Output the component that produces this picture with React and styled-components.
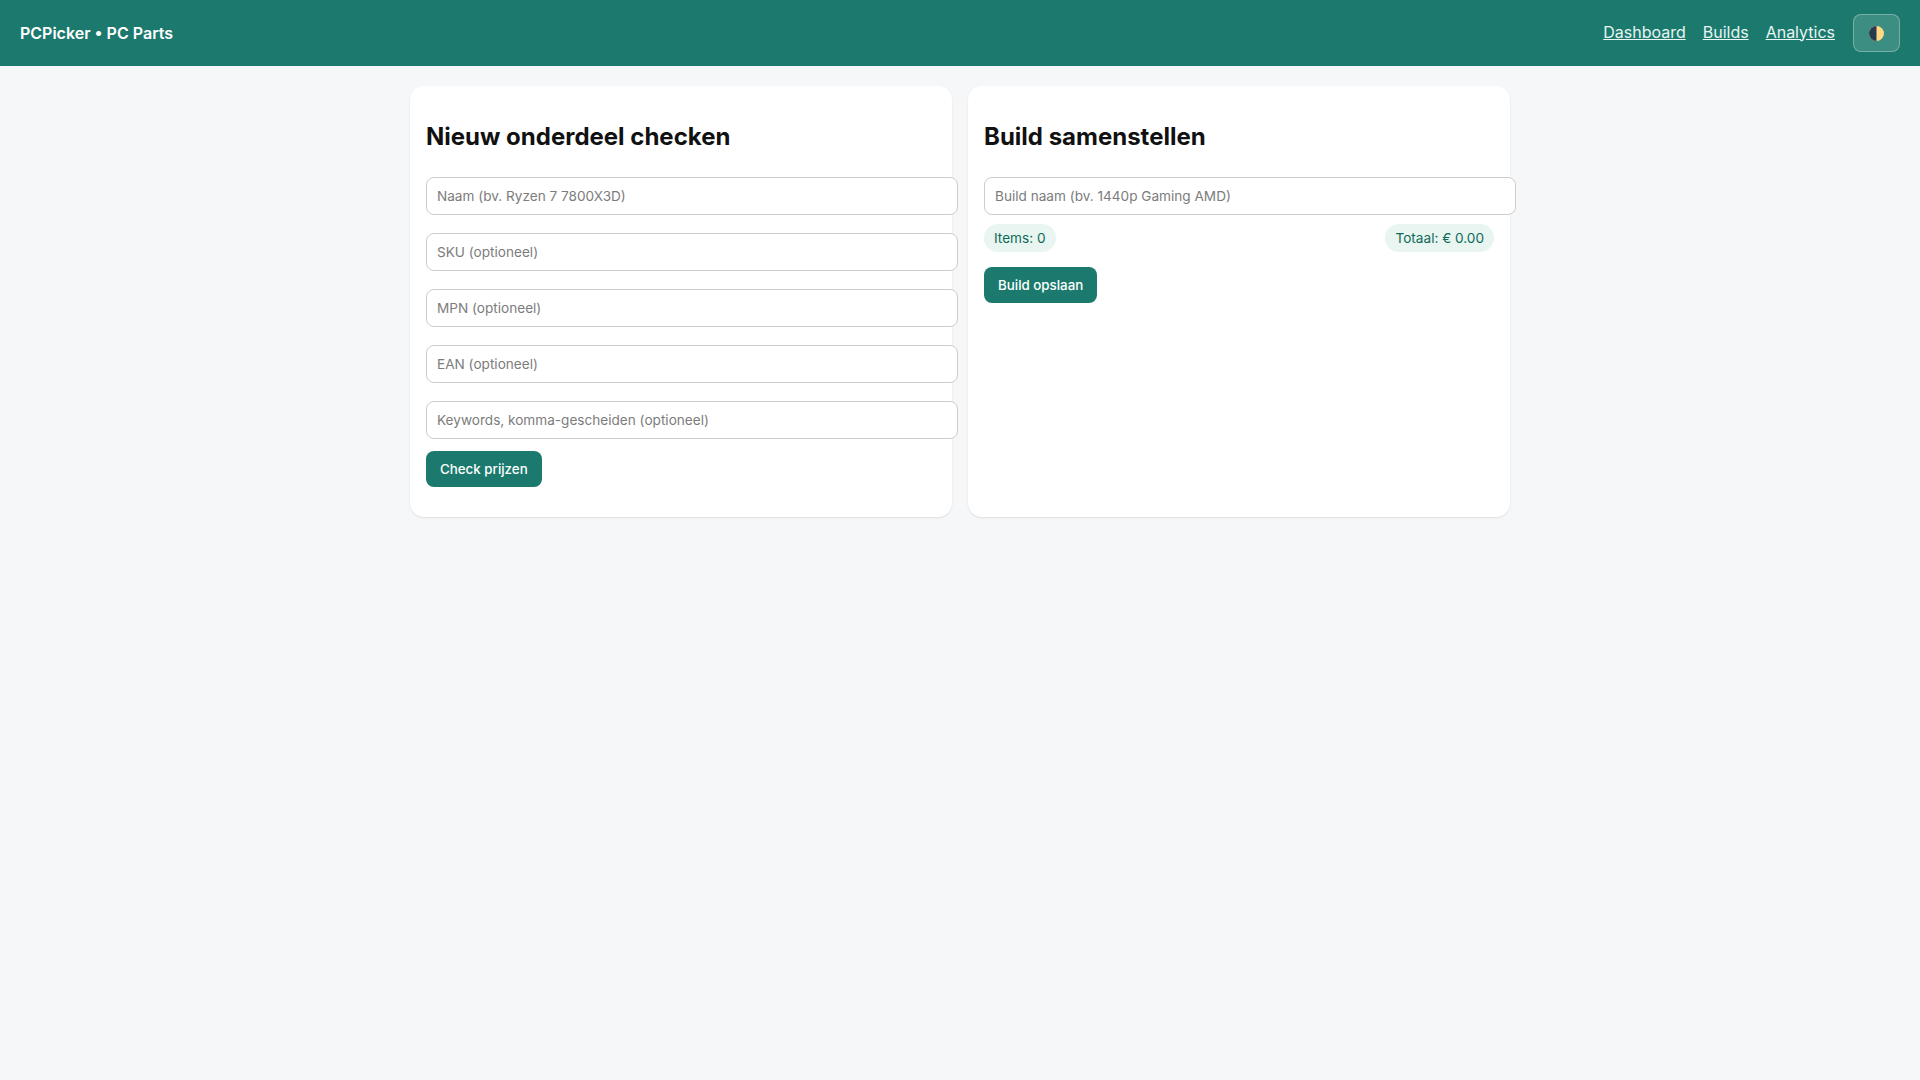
import React from "react";
import styled, { createGlobalStyle } from "styled-components";

const Global = createGlobalStyle`
  html, body { margin: 0; padding: 0; }
  body {
    background: #f5f7f9;
    color: #111111;
    font-family: Inter, "Liberation Sans", sans-serif;
    min-height: 100vh;
  }
`;

const Header = styled.header`
  height: 66px;
  box-sizing: border-box;
  padding: 0 20px;
  background: #1b7a6d;
  display: flex;
  align-items: center;
  justify-content: space-between;
`;
const Brand = styled.div`
  color: #ffffff;
  font-size: 16px;
  font-weight: 600;
`;
const Nav = styled.nav`
  display: flex;
  align-items: center;
  gap: 17px;
`;
const NavLink = styled.a`
  color: #e8f5f2;
  font-size: 16px;
  line-height: 19px;
  padding-bottom: 2px;
  text-decoration: underline;
  cursor: pointer;
  &:nth-child(3) { margin-right: 1px; }
`;
const ThemeButton = styled.button`
  width: 47px;
  height: 38px;
  box-sizing: border-box;
  padding: 0;
  border: 1px solid rgba(255, 255, 255, 0.3);
  border-radius: 8px;
  background: rgba(255, 255, 255, 0.15);
  display: flex;
  align-items: center;
  justify-content: center;
`;
const Main = styled.main`
  width: 1100px;
  margin: 20px auto 0;
  display: grid;
  grid-template-columns: 1fr 1fr;
  gap: 16px;
`;
const Card = styled.section`
  background: #ffffff;
  border-radius: 14px;
  box-shadow: 0 1px 2px rgba(0, 0, 0, 0.1);
  padding: 16px;
  min-width: 0;
`;
const Title = styled.h2`
  margin: 20px 0 26px;
  font-size: 24px;
  line-height: 29px;
  font-weight: 700;
  color: #111111;
`;
const Field = styled.input`
  display: block;
  width: 510px;
  height: 36px;
  box-sizing: content-box;
  padding: 0 10px;
  margin: 0 0 ${(p) => p.$after}px;
  border: 1px solid #cccccc;
  border-radius: 8px;
  background: #ffffff;
  font-family: inherit;
  font-size: 13.6px;
  outline: none;
  &::placeholder { color: #7c7c7c; }
`;
const Summary = styled.div`
  display: flex;
  justify-content: space-between;
  margin-bottom: 15px;
`;
const Pill = styled.span`
  height: 28px;
  padding: 0 10px;
  display: inline-flex;
  align-items: center;
  border-radius: 999px;
  background: #e8f5f1;
  color: #0f6b57;
  font-size: 13.6px;
`;
const Action = styled.button`
  display: block;
  height: 36px;
  padding: 0 14px;
  margin-bottom: 14px;
  border: 0;
  border-radius: 8px;
  background: #1b7a6d;
  color: #ffffff;
  font-family: inherit;
  font-size: 13.33px;
  font-weight: 500;
`;

const fields = [
  "Naam (bv. Ryzen 7 7800X3D)",
  "SKU (optioneel)",
  "MPN (optioneel)",
  "EAN (optioneel)",
  "Keywords, komma-gescheiden (optioneel)",
];

const HalfMoon = () => (
  <svg width="15" height="15" viewBox="0 0 15 15" aria-hidden="true">
    <circle cx="7.5" cy="7.5" r="7.5" fill="#ffd983" />
    <path d="M7.5 0a7.5 7.5 0 0 0 0 15z" fill="#283a4d" />
  </svg>
);

export default function App() {
  return (
    <>
      <Global />
      <Header>
        <Brand>PCPicker • PC Parts</Brand>
        <Nav>
          <NavLink>Dashboard</NavLink>
          <NavLink>Builds</NavLink>
          <NavLink>Analytics</NavLink>
          <ThemeButton aria-label="Thema wisselen">
            <HalfMoon />
          </ThemeButton>
        </Nav>
      </Header>
      <Main>
        <Card>
          <Title>Nieuw onderdeel checken</Title>
          {fields.map((f, i) => (
            <Field key={f} placeholder={f} $after={i === fields.length - 1 ? 12 : 18} />
          ))}
          <Action>Check prijzen</Action>
        </Card>
        <Card>
          <Title>Build samenstellen</Title>
          <Field placeholder="Build naam (bv. 1440p Gaming AMD)" $after={9} />
          <Summary>
            <Pill>Items: 0</Pill>
            <Pill>Totaal: € 0.00</Pill>
          </Summary>
          <Action>Build opslaan</Action>
        </Card>
      </Main>
    </>
  );
}
